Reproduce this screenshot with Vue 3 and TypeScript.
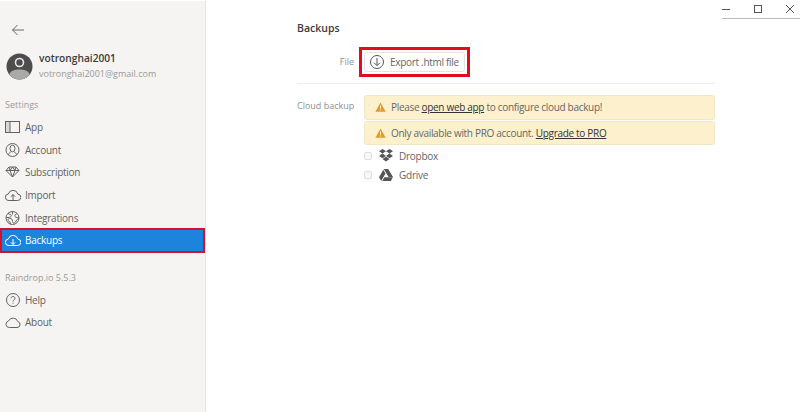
<script setup lang="ts">
interface Item { id: string; label: string; active?: boolean }
const settings: Item[] = [
  { id: 'app', label: 'App' },
  { id: 'account', label: 'Account' },
  { id: 'subscription', label: 'Subscription' },
  { id: 'import', label: 'Import' },
  { id: 'integrations', label: 'Integrations' },
  { id: 'backups', label: 'Backups', active: true },
]
const extra: Item[] = [
  { id: 'help', label: 'Help' },
  { id: 'about', label: 'About' },
]
</script>

<template>
  <div class="window">
    <aside class="sidebar">
      <div class="back">
        <svg width="14" height="12" viewBox="0 0 14 12" fill="none" stroke="#666" stroke-width="1"><path d="M13 6H1.5M6.500 1 1.500 6l5 5" /></svg>
      </div>
      <div class="user">
        <svg class="avatar" width="27" height="27" viewBox="0 0 27 27">
          <circle cx="13.5" cy="13.5" r="13" fill="#4d4d4f" />
          <path d="M3.2 21.5C5 17.5 9 16.6 13.5 16.6s8.5.9 10.3 4.9A13 13 0 0 1 3.2 21.5Z" fill="#a9a9a7" />
          <circle cx="13.5" cy="9.5" r="4" fill="none" stroke="#e8e8e6" stroke-width="1.6" />
        </svg>
        <div class="who">
          <div class="name">votronghai2001</div>
          <div class="mail">votronghai2001@gmail.com</div>
        </div>
      </div>
      <div class="heading">Settings</div>
      <nav class="menu">
        <div v-for="item in settings" :key="item.id" class="item" :class="{ active: item.active }">
          <svg class="ico" width="16" height="16" viewBox="0 0 16 16" fill="none" stroke="currentColor" stroke-width="1">
            <template v-if="item.id === 'app'">
              <rect x="0.5" y="2.5" width="14" height="11" />
              <path d="M5 2.5v11" />
              <path d="M1 3h4v10H1Z" fill="currentColor" fill-opacity=".2" stroke="none" />
            </template>
            <template v-else-if="item.id === 'account'">
              <circle cx="7.5" cy="8" r="6.5" />
              <ellipse cx="7.5" cy="6.5" rx="2.5" ry="3.3" />
              <path d="M3.2 12.800c.5-2 2.500-2.300 3-3.300M11.800 12.800c-.5-2-2.500-2.300-3-3.300" />
            </template>
            <template v-else-if="item.id === 'subscription'">
              <path d="M4 3h7l3 3.500L7.500 13 1 6.500Z" />
              <path d="M1 6.500h13M5 6.500 7.500 13 10 6.500M4 3l1 3.500L7.500 3 10 6.500 11 3" />
            </template>
            <template v-else-if="item.id === 'import'">
              <path d="M4 13.500h8.500a3.200 3.200 0 0 0 .3-6.400A4.900 4.900 0 0 0 3.300 7 3.200 3.200 0 0 0 4 13.500Z" />
              <path d="M8 13V7.500M5.800 9.700 8 7.500l2.200 2.200" />
            </template>
            <template v-else-if="item.id === 'integrations'">
              <circle cx="7.500" cy="8" r="6.500" />
              <path d="M3 3.500c2 1 3 .8 3.300 2S5 7.500 3 7.500 1 8 1 8M12 3.500c-2 .8-2.500 2-2 3s2.500 1 4 1.500M5.500 14.200c0-2-1-2.700-2-3.200s-1-2 1-2.500 3 1 3 3 2 2 3 .5 1-3 3-3M7.500 1.500v3" />
            </template>
            <template v-else>
              <path d="M4 13.500h8.500a3.200 3.200 0 0 0 .3-6.400A4.900 4.900 0 0 0 3.300 7 3.200 3.200 0 0 0 4 13.500Z" />
              <path d="M8 7v5.500M5.800 10.300 8 12.500l2.200-2.200" />
            </template>
          </svg>
          <span>{{ item.label }}</span>
        </div>
      </nav>
      <div class="heading second">Raindrop.io 5.5.3</div>
      <nav class="menu">
        <div v-for="item in extra" :key="item.id" class="item">
          <svg class="ico" width="16" height="16" viewBox="0 0 16 16" fill="none" stroke="currentColor" stroke-width="1">
            <template v-if="item.id === 'help'">
              <circle cx="8" cy="8" r="6.500" />
              <path d="M6 6.300C6 5 7 4.500 8 4.500s2 .7 2 1.800c0 1.500-2 1.500-2 3.200M8 10.700v1" />
            </template>
            <template v-else>
              <path d="M4.500 13.500h7.500a3 3 0 0 0 .8-5.900A5 5 0 0 0 3.500 7a3.300 3.300 0 0 0 1 6.500Z" />
            </template>
          </svg>
          <span>{{ item.label }}</span>
        </div>
      </nav>
    </aside>

    <main class="content">
      <h1 class="title">Backups</h1>
      <section class="row file-row">
        <div class="label right">File</div>
        <div class="control">
          <div class="highlight">
            <button class="export" type="button">
              <svg width="16" height="16" viewBox="0 0 16 16" fill="none" stroke="#555" stroke-width="1"><circle cx="8" cy="8" r="6.500" /><path d="M8 4v7.500M5 8.700l3 3 3-3" /></svg>
              <span>Export .html file</span>
            </button>
          </div>
        </div>
      </section>
      <section class="row cloud-row">
        <div class="label">Cloud backup</div>
        <div class="control stack">
          <div class="alert">
            <svg class="warn" width="11" height="10" viewBox="0 0 11 10"><path d="M5.500 .5 10.700 9.700H.3Z" fill="#e09a2b" /><path d="M5.500 3.500v3.200M5.500 7.500v1" stroke="#fff3d0" stroke-width="1" /></svg>
            <span>Please <u class="link">open web app</u> to configure cloud backup!</span>
          </div>
          <div class="alert">
            <svg class="warn" width="11" height="10" viewBox="0 0 11 10"><path d="M5.500 .5 10.700 9.700H.3Z" fill="#e09a2b" /><path d="M5.500 3.500v3.200M5.500 7.500v1" stroke="#fff3d0" stroke-width="1" /></svg>
            <span>Only available with PRO account. <u class="link">Upgrade to PRO</u></span>
          </div>
          <div class="check">
            <span class="box"></span>
            <svg width="14" height="13" viewBox="0 0 14 13" fill="#555"><path d="M3.500 0 7 2.300 3.500 4.600 0 2.300ZM10.500 0 14 2.300 10.500 4.600 7 2.300ZM0 6.900 3.500 4.600 7 6.900 3.500 9.200ZM10.500 4.600 14 6.900 10.500 9.200 7 6.900ZM3.500 10 7 7.700l3.500 2.300L7 12.500Z" /></svg>
            <span class="service">Dropbox</span>
          </div>
          <div class="check">
            <span class="box"></span>
            <svg width="14" height="12" viewBox="0 0 14 12" fill="#555"><path d="M4.800 0h4.400L14 8h-4.400ZM4.300 .8 6.500 4.600 2.200 12 0 8.200ZM3.200 12 5.400 8.200H14L11.800 12Z" /></svg>
            <span class="service">Gdrive</span>
          </div>
        </div>
      </section>
    </main>

    <div class="controls">
      <svg width="8" height="8" viewBox="0 0 8 8" stroke="#555" fill="none"><path d="M0 4.500h8" /></svg>
      <svg width="8" height="8" viewBox="0 0 8 8" stroke="#555" fill="none"><rect x=".5" y=".5" width="7" height="7" /></svg>
      <svg width="8" height="8" viewBox="0 0 8 8" stroke="#555" fill="none"><path d="m0 0 8 8M8 0 0 8" /></svg>
    </div>
    <div class="bar"></div>
  </div>
</template>

<style scoped>
.window {
  position: relative;
  display: flex;
  width: 800px;
  height: 412px;
  overflow: hidden;
  background: #fff;
  color: #555;
  font-family: "Open Sans", "Noto Sans", sans-serif;
  font-size: 10px;
}
.sidebar {
  box-sizing: border-box;
  width: 206px;
  flex: none;
  background: #f5f4f2;
  border-right: 1px solid #e6e5e3;
  border-top: 1px solid #fff;
  padding-top: 21px;
}
.back { height: 16px; padding-left: 11px; display: flex; align-items: center; }
.user { display: flex; align-items: center; gap: 6px; margin-top: 13px; padding-left: 6px; }
.avatar { flex: none; }
.name { font-size: 10.2px; font-weight: 600; color: #3b3b3b; line-height: 15px; }
.mail { font-size: 9px; color: #9a9a9a; line-height: 15px; }
.heading { margin-top: 17px; padding-left: 5px; font-size: 9px; line-height: 14px; color: #9b9b9b; }
.heading.second { margin-top: 19px; }
.menu { margin-top: 4px; display: flex; flex-direction: column; }
.item {
  display: flex;
  align-items: center;
  gap: 4px;
  height: 22.6px;
  padding-left: 5px;
  color: #626262;
  font-size: 10px;
  letter-spacing: -0.25px;
}
.item .ico { flex: none; }
.item.active {
  background: #1d84de;
  color: #fff;
  border: 2px solid #d0122c;
  box-sizing: border-box;
  height: 25px;
  margin: -1px 0 -1.4px 0;
  padding-left: 3px;
}
.content { flex: 1; padding: 20px 85px 0 91px; min-width: 0; }
.title { margin: 0; font-size: 10.5px; font-weight: 600; color: #3b3b3b; line-height: 16px; }
.row { display: flex; gap: 10px; }
.label { width: 57px; flex: none; font-size: 9px; color: #8f8f8f; line-height: 14px; white-space: nowrap; }
.label.right { text-align: right; }
.file-row { margin-top: 11px; align-items: center; padding-bottom: 6px; border-bottom: 1px solid #ededed; }
.control { flex: 1; min-width: 0; }
.highlight {
  display: inline-flex;
  margin-left: -5px;
  padding: 2px;
  border: 3px solid #e20c1f;
}
.export {
  display: flex;
  align-items: center;
  gap: 5px;
  box-sizing: border-box;
  height: 20px;
  padding: 0 5px 0 4px;
  background: #fff;
  border: 1px solid #e4e4e4;
  border-radius: 3px;
  font: inherit;
  font-size: 10px;
  letter-spacing: -0.3px;
  color: #666;
}
.cloud-row { margin-top: 11px; }
.cloud-row .label { padding-top: 4px; }
.stack { display: flex; flex-direction: column; }
.alert {
  display: flex;
  align-items: center;
  gap: 5px;
  box-sizing: border-box;
  height: 24.5px;
  margin-bottom: 1px;
  padding-left: 10px;
  background: #fdf1cd;
  border: 1px solid #f1e6c6;
  border-radius: 3px;
  font-size: 10px;
  letter-spacing: -0.31px;
  color: #666;
}
.link { color: #333; }
.check { display: flex; align-items: center; height: 19px; font-size: 10px; letter-spacing: -0.25px; color: #666; }
.box {
  box-sizing: border-box;
  width: 8px;
  height: 8px;
  margin-right: 7px;
  border: 1px solid #ddd;
  border-radius: 2px;
  background: #f7f7f7;
}
.service { margin-left: 6px; }
.controls {
  position: absolute;
  top: 5px;
  right: 6px;
  display: flex;
  gap: 24px;
  align-items: center;
}
.bar { position: absolute; top: 18px; left: 722px; right: 0; height: 1px; background: #b9b9b9; }
</style>
